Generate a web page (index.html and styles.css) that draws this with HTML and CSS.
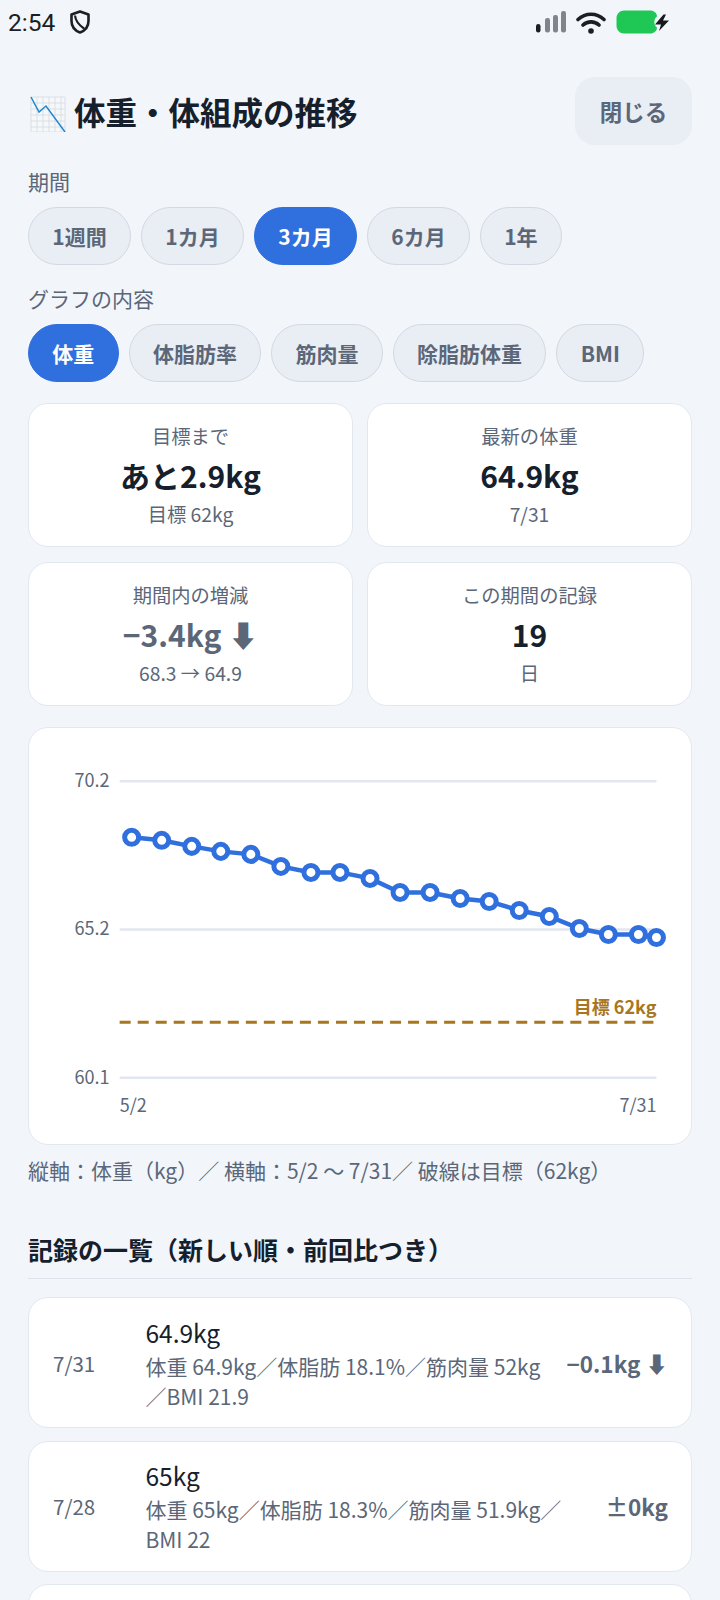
FILE: index.html
```html
<!DOCTYPE html>
<html lang="ja">
<head>
<meta charset="utf-8">
<title>体重・体組成の推移</title>
<link rel="stylesheet" href="styles.css">
</head>
<body>
<div class="status">
  <span class="time">2:54</span>
  <svg class="shield" viewBox="0 0 20 24" width="20" height="24"><path d="M10 1.5 18.5 4.5V11C18.5 17 14.5 20.8 10 22.5 5.5 20.8 1.500 17 1.500 11V4.500Z" fill="none" stroke="#1b1f24" stroke-width="2.600" stroke-linejoin="round"/><path d="M5 5.500C5.500 11 9 15 14 18.500" fill="none" stroke="#1b1f24" stroke-width="2.200"/></svg>
  <span class="status-right">
    <svg class="signal" viewBox="0 0 31 22" width="31" height="22"><rect x="0" y="13" width="4.500" height="8.500" rx="2.200" fill="#1b1f24"/><rect x="9" y="7" width="5" height="14.500" rx="2.200" fill="#80858b"/><rect x="17" y="4" width="5" height="17.500" rx="2.200" fill="#80858b"/><rect x="25" y="0" width="5" height="21.500" rx="2.200" fill="#80858b"/></svg>
    <svg class="wifi" viewBox="0 0 30 23" width="30" height="23"><path d="M2 8.500C9.500 1.500 20.500 1.500 28 8.500M7 14C11.500 9.800 18.500 9.800 23 14" fill="none" stroke="#1b1f24" stroke-width="3.600" stroke-linecap="round"/><circle cx="15" cy="20" r="2.800" fill="#1b1f24"/></svg>
    <svg class="battery" viewBox="0 0 54 24" width="54" height="24"><path d="M8 .5H34C38 .5 41 3 41 6.500 38 8 37 15 41 17.500 41 21 38 23.500 34 23.500H8C4 23.500.5 20 .5 16V8C.5 4 4 .5 8 .5Z" fill="#1fc755"/><path d="M47.500 4.500 39 14.500H45L43 21 53 10.500H47L50 4.500Z" fill="#16181b"/></svg>
  </span>
</div>
<main class="page">
  <header class="top">
    <h1 class="title">
      <svg class="emoji" viewBox="0 0 36 36" width="36" height="36"><path fill="#f6f7f9" d="M1 1h34v35H1z"/><path fill="none" stroke="#d3dce2" stroke-width=".8" d="M1 1h34v35H1zM1 7h34M1 13h34M1 19h34M1 25h34M1 31h34M7 1v35M13 1v35M19 1v35M25 1v35M31 1v35"/><path fill="none" stroke="#1e88d0" stroke-width="1.500" d="M1 1 9 16 16 10 35 36"/></svg>
      <span class="title-text">体重・体組成の推移</span>
    </h1>
    <button class="close">閉じる</button>
  </header>

  <div class="label">期間</div>
  <div class="pills">
    <span class="pill">1週間</span><span class="pill">1カ月</span><span class="pill on">3カ月</span><span class="pill">6カ月</span><span class="pill">1年</span>
  </div>
  <div class="label">グラフの内容</div>
  <div class="pills">
    <span class="pill on">体重</span><span class="pill">体脂肪率</span><span class="pill">筋肉量</span><span class="pill">除脂肪体重</span><span class="pill">BMI</span>
  </div>

  <section class="stats">
    <div class="stat"><div class="stat-label">目標まで</div><div class="stat-value">あと2.9kg</div><div class="stat-sub">目標 62kg</div></div>
    <div class="stat"><div class="stat-label">最新の体重</div><div class="stat-value">64.9kg</div><div class="stat-sub">7/31</div></div>
    <div class="stat"><div class="stat-label">期間内の増減</div><div class="stat-value down">−3.4kg ⬇</div><div class="stat-sub">68.3 → 64.9</div></div>
    <div class="stat"><div class="stat-label">この期間の記録</div><div class="stat-value">19</div><div class="stat-sub">日</div></div>
  </section>

  <section class="chart-card">
    <svg class="chart" viewBox="29.5 728 661 415">
      <g class="grid"><line x1="120" y1="781" x2="656" y2="781"/><line x1="120" y1="929" x2="656" y2="929"/><line x1="120" y1="1077" x2="656" y2="1077"/></g>
      <g class="axis">
        <text x="110" y="787" text-anchor="end">70.2</text>
        <text x="110" y="935" text-anchor="end">65.2</text>
        <text x="110" y="1083" text-anchor="end">60.1</text>
        <text x="120" y="1111">5/2</text>
        <text x="656" y="1111" text-anchor="end">7/31</text>
      </g>
      <line class="goal" x1="120" y1="1021.500" x2="656" y2="1021.500"/>
      <text class="goal-label" x="656" y="1013" text-anchor="end">目標 62kg</text>
      <polyline class="trend" points="132,837 162,840 192,846 221,851 251,854 281,866 311,872 340,872 370,878 400,892 430,892 460,898 489,901 519,910 549,916 579,928 608,934 638,934 656,937"/>
      <g class="dots">
        <circle cx="132" cy="837" r="7"/><circle cx="162" cy="840" r="7"/><circle cx="192" cy="846" r="7"/><circle cx="221" cy="851" r="7"/><circle cx="251" cy="854" r="7"/><circle cx="281" cy="866" r="7"/><circle cx="311" cy="872" r="7"/><circle cx="340" cy="872" r="7"/><circle cx="370" cy="878" r="7"/><circle cx="400" cy="892" r="7"/><circle cx="430" cy="892" r="7"/><circle cx="460" cy="898" r="7"/><circle cx="489" cy="901" r="7"/><circle cx="519" cy="910" r="7"/><circle cx="549" cy="916" r="7"/><circle cx="579" cy="928" r="7"/><circle cx="608" cy="934" r="7"/><circle cx="638" cy="934" r="7"/><circle cx="656" cy="937" r="7"/>
      </g>
    </svg>
  </section>
  <p class="caption">縦軸：体重（kg）／ 横軸：5/2 〜 7/31／ 破線は目標（62kg）</p>

  <h2 class="list-head">記録の一覧（新しい順・前回比つき）</h2>
  <ul class="list">
    <li class="row">
      <span class="date">7/31</span>
      <div class="row-body"><div class="row-main">64.9kg</div><div class="row-sub">体重 64.9kg／体脂肪 18.1%／筋肉量 52kg／BMI 21.9</div></div>
      <span class="delta">−0.1kg ⬇</span>
    </li>
    <li class="row">
      <span class="date">7/28</span>
      <div class="row-body"><div class="row-main">65kg</div><div class="row-sub">体重 65kg／体脂肪 18.3%／筋肉量 51.9kg／BMI 22</div></div>
      <span class="delta">±0kg</span>
    </li>
    <li class="row"></li>
  </ul>
</main>
</body>
</html>
```
FILE: styles.css
```css
* { box-sizing: border-box; }
html, body { margin: 0; height: 1600px; overflow: hidden; }
body {
  background: #f2f6fb;
  color: #16202c;
  font-family: "Noto Sans CJK JP", "Noto Sans", "DejaVu Sans", sans-serif;
}
.status { height: 44px; display: flex; align-items: center; padding-left: 8px; }
.time { font-family: Roboto, sans-serif; font-size: 24.500px; color: #1b1f24; }
.shield { margin-left: 15px; }
.status-right { margin-left: auto; margin-right: 50px; display: flex; align-items: center; }
.signal { margin-right: 9px; }
.wifi { margin-right: 10px; }
.page { padding: 0 28px; }
.top { display: flex; align-items: center; justify-content: space-between; margin-top: 32.500px; }
.title { display: flex; align-items: center; gap: 8px; margin: 0; font-size: 31.500px; font-weight: 700; padding-left: 2px; }
.emoji { margin-top: 7px; }
.title-text { margin-top: 1px; }
.close {
  width: 117px; height: 68px; border: 0; border-radius: 20px;
  background: #e9edf4; color: #5b6778;
  font: 600 22.500px "Noto Sans CJK JP", sans-serif;
}
.label { font-size: 21px; line-height: 28px; color: #5b6778; margin-bottom: 12px; }
.top + .label { margin-top: 22.500px; }
.pills + .label { margin-top: 18.500px; }
.label + .pills { margin-top: 0; }
.pills { display: flex; gap: 10px; }
.pill {
  height: 58px; padding: 0 23.300px; display: flex; align-items: center;
  border: 1.500px solid #d3d9e2; border-radius: 29px;
  background: #e9edf4; color: #5b6778;
  font-size: 21px; font-weight: 700;
}
.pill.on { background: #2f6fde; border-color: #2f6fde; color: #fff; }
.stats { display: grid; grid-template-columns: 1fr 1fr; gap: 15.500px 14px; margin-top: 21.500px; }
.stat, .chart-card, .row { background: #fff; border: 1.500px solid #e2e8f0; border-radius: 20px; }
.stat { height: 143.500px; display: flex; flex-direction: column; align-items: center; padding-top: 18px; }
.stat-label { font-size: 19.300px; line-height: 28px; color: #5b6778; }
.stat-value { font-size: 30px; line-height: 42px; font-weight: 700; margin-top: 3.500px; }
.stat-value.down, .delta { color: #5b6778; }
.stat-sub { font-size: 19.300px; line-height: 28px; color: #5b6778; margin-top: 4px; }
.chart-card { margin-top: 21px; height: 418px; }
.chart { display: block; width: 100%; height: 100%; }
.grid line { stroke: #e2e6ef; stroke-width: 2.500; }
.axis text { font-size: 18px; fill: #5b6778; }
.goal { stroke: #a8761e; stroke-width: 3; stroke-dasharray: 11 7; }
.goal-label { font-size: 18px; font-weight: 700; fill: #a8761e; }
.trend { fill: none; stroke: #2f6fde; stroke-width: 4.500; }
.dots circle { fill: #fff; stroke: #2f6fde; stroke-width: 5; }
.caption { margin: 10px 0 0; font-size: 21px; line-height: 30px; color: #5b6778; white-space: nowrap; }
.list-head { margin: 46.500px 0 0; padding-bottom: 11px; border-bottom: 1.500px solid #dfe4ec; font-size: 25px; line-height: 36px; font-weight: 700; }
.list { list-style: none; margin: 18px 0 0; padding: 0; display: flex; flex-direction: column; gap: 12.500px; }
.row { display: flex; align-items: center; min-height: 131px; padding: 0 23px 0 24px; }
.date { width: 92.500px; flex: none; font-size: 20.500px; color: #5b6778; }
.row-body { flex: 1; min-width: 0; }
.row-main { font-size: 24.500px; line-height: 36px; }
.row-sub { font-size: 21px; line-height: 30px; color: #5b6778; }
.delta { flex: none; margin-left: 14px; font-size: 22.500px; font-weight: 700; }
```
